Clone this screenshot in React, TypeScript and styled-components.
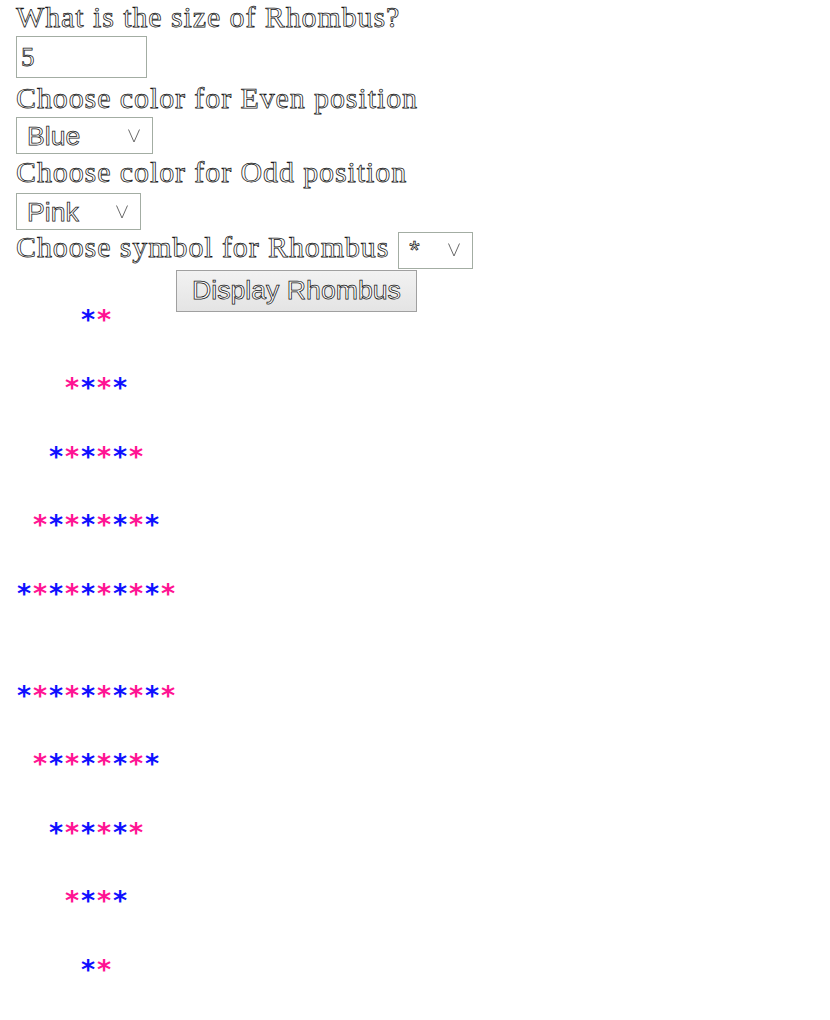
import React from "react";
import styled, { createGlobalStyle } from "styled-components";

const GlobalStyle = createGlobalStyle`
  html, body {
    margin: 0;
    padding: 0;
    background: #ffffff;
  }
`;

const Page = styled.main`
  display: flex;
  flex-direction: column;
  align-items: flex-start;
  padding: 0 16px;
  font-family: "Liberation Serif", "Times New Roman", serif;
`;

const Label = styled.label<{ $mt?: number }>`
  display: block;
  margin-top: ${(p) => p.$mt ?? 0}px;
  font-size: 30px;
  line-height: 34.5px;
  letter-spacing: 0.9px;
  color: #ffffff;
  -webkit-text-stroke: 0.75px #151515;
  white-space: nowrap;
`;

const SizeInput = styled.input<{ $mt?: number }>`
  box-sizing: border-box;
  margin: ${(p) => p.$mt ?? 0}px 0 0 0;
  width: 131px;
  height: 42px;
  padding: 0 4px;
  border: 1px solid #a3ada3;
  border-radius: 0;
  outline: none;
  background: #ffffff;
  font-family: "Liberation Serif", "Times New Roman", serif;
  font-size: 27px;
  color: #ffffff;
  -webkit-text-stroke: 0.75px #151515;
`;

const SelectBox = styled.div<{ $mt?: number; $width: number }>`
  box-sizing: border-box;
  display: inline-flex;
  align-items: center;
  margin-top: ${(p) => p.$mt ?? 0}px;
  width: ${(p) => p.$width}px;
  height: 37px;
  padding: 0 12px 0 10px;
  border: 1px solid #a3ada3;
  background: #ffffff;
`;

const NativeSelect = styled.select`
  flex: 1;
  min-width: 0;
  appearance: none;
  -webkit-appearance: none;
  border: none;
  outline: none;
  background: transparent;
  padding: 0;
  margin: 0;
  font-family: "Liberation Sans", Arial, sans-serif;
  font-size: 26.67px;
  color: #ffffff;
  -webkit-text-stroke: 0.75px #151515;
`;

const Chevron = styled.svg`
  flex: none;
  width: 12px;
  height: 14px;
`;

const SymbolRow = styled.div<{ $mt?: number }>`
  display: flex;
  align-items: flex-start;
  gap: 9px;
  margin-top: ${(p) => p.$mt ?? 0}px;
`;

const DisplayButton = styled.button`
  box-sizing: border-box;
  margin: 1px 0 0 160px;
  width: 241px;
  height: 42px;
  padding: 0;
  border: 1px solid #a0a0a0;
  border-radius: 0;
  background: linear-gradient(#f2f2f2, #e4e4e4);
  font-family: "Liberation Sans", Arial, sans-serif;
  font-size: 26.67px;
  color: #ffffff;
  -webkit-text-stroke: 0.75px #151515;
  cursor: pointer;
`;

const Rhombus = styled.div`
  display: flex;
  flex-direction: column;
  margin-top: -4px;
`;

const StarRow = styled.div<{ $indent: number }>`
  display: flex;
  align-items: flex-start;
  height: 68.5px;
  padding-left: ${(p) => p.$indent * 16}px;
`;

const Spacer = styled.div`
  height: 33.5px;
`;

const Star = styled.span<{ $color: string }>`
  display: inline-block;
  width: 16px;
  height: 16px;
  text-align: center;
  font-family: "DejaVu Sans", sans-serif;
  font-weight: bold;
  font-size: 27px;
  line-height: 24px;
  color: ${(p) => p.$color};
`;

const BLUE = "#1010ff";
const PINK = "#ff1493";

function ChevronIcon() {
  return (
    <Chevron viewBox="0 0 12 14" aria-hidden="true">
      <polyline points="0.5,0.5 6,13 11.5,0.5" fill="none" stroke="#6a6a6a" strokeWidth="1" />
    </Chevron>
  );
}

type RowSpec = { count: number; indent: number; startBlue: boolean };

const top: RowSpec[] = [
  { count: 2, indent: 4, startBlue: true },
  { count: 4, indent: 3, startBlue: false },
  { count: 6, indent: 2, startBlue: true },
  { count: 8, indent: 1, startBlue: false },
  { count: 10, indent: 0, startBlue: true },
];

const bottom: RowSpec[] = [...top].reverse();

function Row({ spec }: { spec: RowSpec }) {
  return (
    <StarRow $indent={spec.indent}>
      {Array.from({ length: spec.count }, (_, i) => {
        const blue = spec.startBlue ? i % 2 === 0 : i % 2 === 1;
        return (
          <Star key={i} $color={blue ? BLUE : PINK}>
            *
          </Star>
        );
      })}
    </StarRow>
  );
}

export default function App() {
  return (
    <>
      <GlobalStyle />
      <Page>
        <Label htmlFor="size">What is the size of Rhombus?</Label>
        <SizeInput id="size" $mt={1.5} defaultValue="5" />
        <Label $mt={2.5}>Choose color for Even position</Label>
        <SelectBox $mt={2} $width={137}>
          <NativeSelect defaultValue="Blue">
            <option>Blue</option>
            <option>Pink</option>
            <option>Green</option>
          </NativeSelect>
          <ChevronIcon />
        </SelectBox>
        <Label $mt={0.5}>Choose color for Odd position</Label>
        <SelectBox $mt={4} $width={125}>
          <NativeSelect defaultValue="Pink">
            <option>Blue</option>
            <option>Pink</option>
            <option>Green</option>
          </NativeSelect>
          <ChevronIcon />
        </SelectBox>
        <SymbolRow $mt={0.3}>
          <Label>Choose symbol for Rhombus</Label>
          <SelectBox $mt={1.7} $width={75}>
            <NativeSelect defaultValue="*">
              <option>*</option>
              <option>#</option>
              <option>@</option>
            </NativeSelect>
            <ChevronIcon />
          </SelectBox>
        </SymbolRow>
        <DisplayButton type="button">Display Rhombus</DisplayButton>
        <Rhombus>
          {top.map((s, i) => (
            <Row key={`t${i}`} spec={s} />
          ))}
          <Spacer />
          {bottom.map((s, i) => (
            <Row key={`b${i}`} spec={s} />
          ))}
        </Rhombus>
      </Page>
    </>
  );
}
